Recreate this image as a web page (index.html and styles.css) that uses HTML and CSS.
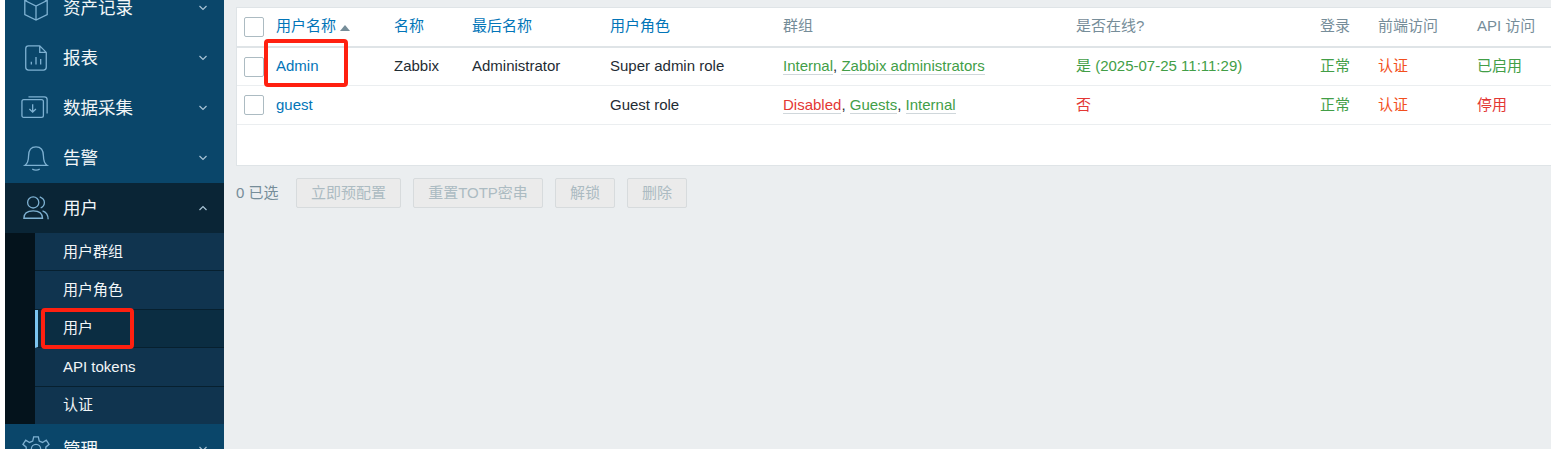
FILE: index.html
```html
<!DOCTYPE html>
<html lang="zh-CN">
<head>
<meta charset="utf-8">
<title>用户</title>
<link rel="stylesheet" href="styles.css">
</head>
<body>
<div class="page">
  <aside class="sidebar">
    <nav class="menu">
      <div class="item first">
        <svg class="ico" viewBox="0 0 30 30"><path d="M15 2 L27 7 V22 L15 28 L3 22 V7 Z M3 7 L15 13 L27 7 M15 13 V28"/></svg>
        <span class="label">资产记录</span>
        <svg class="chev" viewBox="0 0 10 6"><path d="M1.5 1 L5 4.5 L8.500 1"/></svg>
      </div>
      <div class="item">
        <svg class="ico" viewBox="0 0 30 30"><path d="M7 2 H19 L26 9 V25 Q26 28 23 28 H7 Q4 28 4 25 V5 Q4 2 7 2 Z M19 2 V9 H26 M10 22 V19 M15 22 V14 M20 22 V16"/></svg>
        <span class="label">报表</span>
        <svg class="chev" viewBox="0 0 10 6"><path d="M1.500 1 L5 4.500 L8.500 1"/></svg>
      </div>
      <div class="item">
        <svg class="ico wide" viewBox="0 0 30 30"><path d="M3 6 H22 Q24 6 24 8 V23 Q24 25 22 25 H3 Q1 25 1 23 V8 Q1 6 3 6 Z M8 3 H25 Q28 3 28 6 V21 M12.500 11 V19 M9 16 L12.500 19.500 L16 16"/></svg>
        <span class="label">数据采集</span>
        <svg class="chev" viewBox="0 0 10 6"><path d="M1.500 1 L5 4.500 L8.500 1"/></svg>
      </div>
      <div class="item">
        <svg class="ico" viewBox="0 0 30 30"><path d="M3 23 Q7 20 7 13 Q7 3 15 3 Q23 3 23 13 Q23 20 27 23 Z M11 27 Q15 29 19 27"/></svg>
        <span class="label">告警</span>
        <svg class="chev" viewBox="0 0 10 6"><path d="M1.500 1 L5 4.500 L8.500 1"/></svg>
      </div>
      <div class="item open">
        <svg class="ico" viewBox="0 0 30 30"><circle cx="12" cy="9" r="6"/><path d="M2 26 Q2 18 12 18 Q22 18 22 26 Z M19 3 Q24 5 24 9 Q24 13 20 15 M22 18 Q28 20 28 27"/></svg>
        <span class="label">用户</span>
        <svg class="chev" viewBox="0 0 10 6"><path d="M1.500 5 L5 1.500 L8.500 5"/></svg>
      </div>
      <div class="sub">
        <a class="sub-item">用户群组</a>
        <a class="sub-item">用户角色</a>
        <a class="sub-item current">用户</a>
        <a class="sub-item">API tokens</a>
        <a class="sub-item">认证</a>
      </div>
      <div class="item last">
        <svg class="ico" viewBox="0 0 30 30"><circle cx="15" cy="15" r="5"/><path d="M12.500 2 H17.500 L18.500 6.500 L22 8 L26 5.500 L29 10 L25.500 13 V17 L29 20 L26 24.500 L22 22 L18.500 23.500 L17.500 28 H12.500 L11.500 23.500 L8 22 L4 24.500 L1 20 L4.500 17 V13 L1 10 L4 5.500 L8 8 L11.500 6.500 Z"/></svg>
        <span class="label">管理</span>
        <svg class="chev" viewBox="0 0 10 6"><path d="M1.500 1 L5 4.500 L8.500 1"/></svg>
      </div>
    </nav>
  </aside>
  <main class="main">
    <section class="panel">
      <table class="users">
        <colgroup>
          <col class="c-check"><col class="c-user"><col class="c-name"><col class="c-last"><col class="c-role"><col class="c-groups"><col class="c-online"><col class="c-login"><col class="c-front"><col class="c-api">
        </colgroup>
        <thead>
          <tr>
            <th><span class="box"></span></th>
            <th class="link">用户名称<span class="sort"></span></th>
            <th class="link">名称</th>
            <th class="link">最后名称</th>
            <th class="link">用户角色</th>
            <th>群组</th>
            <th>是否在线?</th>
            <th>登录</th>
            <th>前端访问</th>
            <th>API 访问</th>
          </tr>
        </thead>
        <tbody>
          <tr class="row-a">
            <td><span class="box"></span></td>
            <td class="link">Admin</td>
            <td>Zabbix</td>
            <td>Administrator</td>
            <td>Super admin role</td>
            <td><span class="tag green">Internal</span>, <span class="tag green">Zabbix administrators</span></td>
            <td class="green">是 (2025-07-25 11:11:29)</td>
            <td class="green">正常</td>
            <td class="orange">认证</td>
            <td class="green">已启用</td>
          </tr>
          <tr class="row-b">
            <td><span class="box"></span></td>
            <td class="link">guest</td>
            <td></td>
            <td></td>
            <td>Guest role</td>
            <td><span class="tag red">Disabled</span>, <span class="tag green">Guests</span>, <span class="tag green">Internal</span></td>
            <td class="red">否</td>
            <td class="green">正常</td>
            <td class="orange">认证</td>
            <td class="red">停用</td>
          </tr>
        </tbody>
      </table>
    </section>
    <div class="actions">
      <span class="count">0 已选</span>
      <button class="btn b1" disabled>立即预配置</button>
      <button class="btn b2" disabled>重置TOTP密串</button>
      <button class="btn b3" disabled>解锁</button>
      <button class="btn b3" disabled>删除</button>
    </div>
  </main>
</div>
<div class="mark mark-admin"></div>
<div class="mark mark-user"></div>
</body>
</html>
```
FILE: styles.css
```css
* { box-sizing: border-box; }
html, body { margin: 0; height: 100%; overflow: hidden; background: #ebeef0; }
body { font-family: "Liberation Sans", "Noto Sans CJK SC", sans-serif; font-size: 15px; line-height: 20px; color: #1f2c33; }
.page { display: flex; height: 449px; overflow: hidden; }

.sidebar { width: 224px; flex: none; border-left: 5px solid #fff; background: #0a466a; overflow: hidden; }
.menu { margin-top: -18px; }
.item { height: 50px; display: flex; align-items: center; color: #f2f6f8; font-size: 17.500px; position: relative; }
.item.first { height: 51px; }
.item.open { background: #0a2536; }
.ico { width: 28px; height: 28px; margin-left: 17px; flex: none; fill: none; stroke: #7eb1d2; stroke-width: 1.400; }
.ico.wide { margin-left: 16px; margin-right: 1px; }
.label { margin-left: 13px; flex: 1; }
.chev { width: 10px; height: 6px; margin-right: 16px; flex: none; fill: none; stroke: #a9c4d6; stroke-width: 1.200; }

.sub { height: 191px; border-left: 30px solid #04131c; background: #10344f; display: flex; flex-direction: column; }
.sub-item { height: 38.400px; flex: none; display: flex; align-items: center; padding-left: 28px; color: #f2f6f8; border-bottom: 1px solid #07202f; }
.sub-item:last-child { height: 37.400px; border-bottom: 0; }
.sub-item.current { background: #0b2d42; border-left: 3px solid #7cc4ef; padding-left: 25px; }

.main { flex: 1; min-width: 0; padding: 7px 0 0 12px; }
.panel { height: 159px; background: #fff; border: 1px solid #dfe4e7; border-right: 0; }
.users { width: 1314px; table-layout: fixed; border-collapse: separate; border-spacing: 0; }
.c-check { width: 39px; } .c-user { width: 118px; } .c-name { width: 78px; } .c-last { width: 138px; }
.c-role { width: 173px; } .c-groups { width: 293px; } .c-online { width: 244px; } .c-login { width: 58px; }
.c-front { width: 99px; } .c-api { width: 74px; }
.users th { height: 40px; padding: 0 0 2px; text-align: left; font-weight: 400; color: #768d99; border-bottom: 2px solid #dfe4e7; white-space: nowrap; }
.users td { padding: 0 0 1px; border-bottom: 1px solid #ebeef0; white-space: nowrap; }
.row-a td { height: 38px; }
.row-b td { height: 39px; }
.users th:first-child, .users td:first-child { padding-left: 7px; padding-bottom: 0; }
.users .link { color: #0275b8; }
.box { display: block; width: 20px; height: 20px; background: #fff; border: 1px solid #acbbc2; border-radius: 2px; }
.sort { display: inline-block; margin-left: 4px; border-left: 5px solid transparent; border-right: 5px solid transparent; border-bottom: 6px solid #768d99; }
.users .green, .green { color: #429e47; }
.users .red, .red { color: #e33734; }
.users .orange { color: #f24f1d; }
.tag { border-bottom: 1px solid #d0d7db; }

.actions { display: flex; align-items: center; margin-top: 12px; height: 30px; }
.count { width: 60px; color: #768d99; flex: none; }
.btn { height: 30px; margin: 0 12px 0 0; padding: 0; font: inherit; color: #acbbc2; background: #ebebeb; border: 1px solid #d7dbdd; border-radius: 2px; }
.b1 { width: 105px; } .b2 { width: 130px; } .b3 { width: 60px; }

.mark { position: absolute; border: 4px solid #ff2010; border-radius: 4px; }
.mark-admin { left: 264px; top: 39px; width: 84px; height: 48px; }
.mark-user { left: 41px; top: 308px; width: 93px; height: 41px; }
```
